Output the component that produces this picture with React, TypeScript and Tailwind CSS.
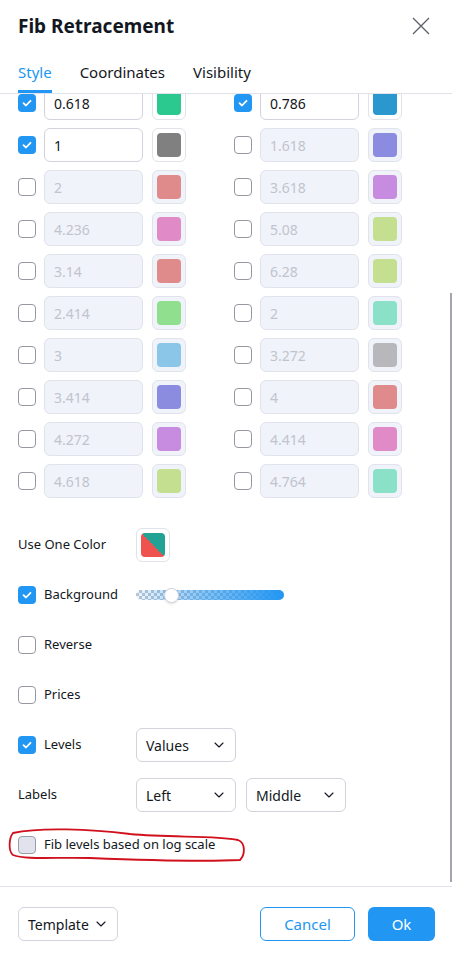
import { ChevronDown } from "lucide-react";

type Level = { value: string; color: string; on: boolean };

const left: Level[] = [
  { value: "0.618", color: "#2bc98f", on: true },
  { value: "1", color: "#808080", on: true },
  { value: "2", color: "#e08b8b", on: false },
  { value: "4.236", color: "#e08bc8", on: false },
  { value: "3.14", color: "#e08b8b", on: false },
  { value: "2.414", color: "#8fdf8f", on: false },
  { value: "3", color: "#8bc6e8", on: false },
  { value: "3.414", color: "#8b8be0", on: false },
  { value: "4.272", color: "#c78be0", on: false },
  { value: "4.618", color: "#c3df8f", on: false },
];

const right: Level[] = [
  { value: "0.786", color: "#2a98cf", on: true },
  { value: "1.618", color: "#8b8be0", on: false },
  { value: "3.618", color: "#c78be0", on: false },
  { value: "5.08", color: "#c3df8f", on: false },
  { value: "6.28", color: "#c3df8f", on: false },
  { value: "2", color: "#8be0c8", on: false },
  { value: "3.272", color: "#b8b8bc", on: false },
  { value: "4", color: "#e08b8b", on: false },
  { value: "4.414", color: "#e08bc8", on: false },
  { value: "4.764", color: "#8be0c8", on: false },
];

function Checkbox({ on, muted }: { on: boolean; muted?: boolean }) {
  if (on) {
    return (
      <span className="flex size-[18px] shrink-0 items-center justify-center rounded-[4px] bg-[#2196f3]">
        <svg width="12" height="12" viewBox="0 0 12 12" fill="none">
          <path d="M2.5 6.2 5 8.5 9.5 3.8" stroke="white" strokeWidth="1.8" strokeLinecap="round" strokeLinejoin="round" />
        </svg>
      </span>
    );
  }
  return (
    <span
      className={
        muted
          ? "size-[18px] shrink-0 rounded-[4px] border border-[#9a9ea8] bg-[#e0e3eb]"
          : "size-[18px] shrink-0 rounded-[4px] border border-[#9598a1] bg-white"
      }
    />
  );
}

function LevelCell({ level }: { level: Level }) {
  return (
    <div className="flex h-[34px] items-center">
      <Checkbox on={level.on} />
      <div
        className={
          level.on
            ? "ml-2 flex h-[34px] w-[99px] items-center rounded-[6px] border border-[#d1d4dc] bg-white px-[9px] text-[14px] text-[#131722]"
            : "ml-2 flex h-[34px] w-[99px] items-center rounded-[6px] border border-[#e0e3eb] bg-[#f0f3fa] px-[9px] text-[14px] text-[#c1c4cd]"
        }
      >
        {level.value}
      </div>
      <div
        className={
          level.on
            ? "ml-[9px] flex size-[34px] items-center justify-center rounded-[6px] border border-[#e0e3eb] bg-white"
            : "ml-[9px] flex size-[34px] items-center justify-center rounded-[6px] border border-[#e0e3eb] bg-[#f0f3fa]"
        }
      >
        <span className="size-[24px] rounded-[4px]" style={{ backgroundColor: level.color }} />
      </div>
    </div>
  );
}

function Select({ label, width }: { label: string; width: string }) {
  return (
    <div
      className={`flex h-[34px] items-center justify-between rounded-[6px] border border-[#d1d4dc] bg-white pl-[9px] pr-[8px] text-[14px] text-[#131722] ${width}`}
    >
      <span>{label}</span>
      <ChevronDown size={16} strokeWidth={1.6} className="text-[#131722]" />
    </div>
  );
}

export default function App() {
  return (
    <div
      className="relative flex h-[957px] w-[452px] flex-col overflow-hidden bg-white text-[#131722]"
      style={{ fontFamily: '"Noto Sans", "Open Sans", sans-serif' }}
    >
      <header className="flex h-[52px] shrink-0 items-center justify-between pl-[18px] pr-[22px]">
        <h1 className="text-[19px] font-bold">Fib Retracement</h1>
        <svg width="18" height="18" viewBox="0 0 18 18" fill="none" className="text-[#5d606b]">
          <path d="M1 1 17 17M17 1 1 17" stroke="currentColor" strokeWidth="1.3" />
        </svg>
      </header>

      <nav className="flex h-[42px] shrink-0 items-stretch gap-[28px] border-b border-[#e0e3eb] px-[18px] text-[15px]">
        <div className="flex flex-col justify-center border-b-[3px] border-[#2196f3] pt-[3px] text-[#2196f3]">Style</div>
        <div className="flex items-center">Coordinates</div>
        <div className="flex items-center">Visibility</div>
      </nav>

      <div className="relative flex-1 overflow-hidden">
        <div className="-mt-[8px] flex flex-col">
          <div className="grid grid-cols-[216px_1fr] gap-y-[8px] pl-[18px]">
            {left.map((l, i) => (
              <>
                <LevelCell key={`l${i}`} level={l} />
                <LevelCell key={`r${i}`} level={right[i]} />
              </>
            ))}
          </div>

          <div className="mt-[30px] flex flex-col gap-[16px] px-[18px] text-[13px]">
            <div className="flex h-[34px] items-center">
              <span className="w-[118px]">Use One Color</span>
              <div className="flex size-[34px] items-center justify-center rounded-[6px] border border-[#e0e3eb]">
                <span className="size-[24px] rounded-[4px] bg-[linear-gradient(to_top_right,#ef5350_50%,#22a195_50%)]" />
              </div>
            </div>

            <div className="relative flex h-[34px] items-center">
              <Checkbox on />
              <span className="ml-[8px] w-[92px]">Background</span>
              <div className="relative h-[10px] w-[148px] overflow-hidden rounded-full bg-[repeating-conic-gradient(#c2c6ce_0%_25%,#ffffff_0%_50%)] bg-size-[6px_6px]">
                <div className="absolute inset-0 bg-[linear-gradient(90deg,rgba(33,150,243,0.08),rgba(33,150,243,0.55)_45%,#2196f3)]" />
              </div>
              <span className="absolute left-[146px] top-[10px] size-[15px] rounded-full border border-[#d1d4dc] bg-white shadow-sm" />
            </div>

            <div className="flex h-[34px] items-center">
              <Checkbox on={false} />
              <span className="ml-[8px]">Reverse</span>
            </div>

            <div className="flex h-[34px] items-center">
              <Checkbox on={false} />
              <span className="ml-[8px]">Prices</span>
            </div>

            <div className="flex h-[34px] items-center">
              <Checkbox on />
              <span className="ml-[8px] w-[92px]">Levels</span>
              <Select label="Values" width="w-[100px]" />
            </div>

            <div className="flex h-[34px] items-center">
              <span className="w-[118px]">Labels</span>
              <Select label="Left" width="w-[100px]" />
              <div className="ml-[10px]">
                <Select label="Middle" width="w-[100px]" />
              </div>
            </div>

            <div className="flex h-[34px] items-center">
              <Checkbox on={false} muted />
              <span className="ml-[8px]">Fib levels based on log scale</span>
            </div>
          </div>
        </div>

        <div className="absolute right-0 top-[199px] h-[589px] w-[2px] bg-[#a3a6af]" />
      </div>

      <footer className="flex h-[71px] shrink-0 items-start justify-between border-t border-[#e0e3eb] pl-[18px] pr-[17px] pt-[20px] text-[14px]">
        <Select label="Template" width="w-[100px]" />
        <div className="flex gap-[13px]">
          <button className="h-[34px] w-[95px] rounded-[6px] border border-[#2196f3] bg-white text-[15px] text-[#2196f3]">
            Cancel
          </button>
          <button className="h-[34px] w-[67px] rounded-[6px] bg-[#2196f3] text-[15px] text-white">Ok</button>
        </div>
      </footer>

      <svg className="pointer-events-none absolute left-0 top-0" width="452" height="957" viewBox="0 0 452 957" fill="none">
        <path
          d="M13 833 C 40 827, 90 829, 130 834 C 170 838, 215 835, 238 840 C 246 843, 245 855, 240 860 C 200 862, 140 860, 90 858 C 55 857, 25 860, 13 855 C 8 851, 9 838, 13 833 Z"
          stroke="#d0101c"
          strokeWidth="1.8"
        />
      </svg>
    </div>
  );
}
